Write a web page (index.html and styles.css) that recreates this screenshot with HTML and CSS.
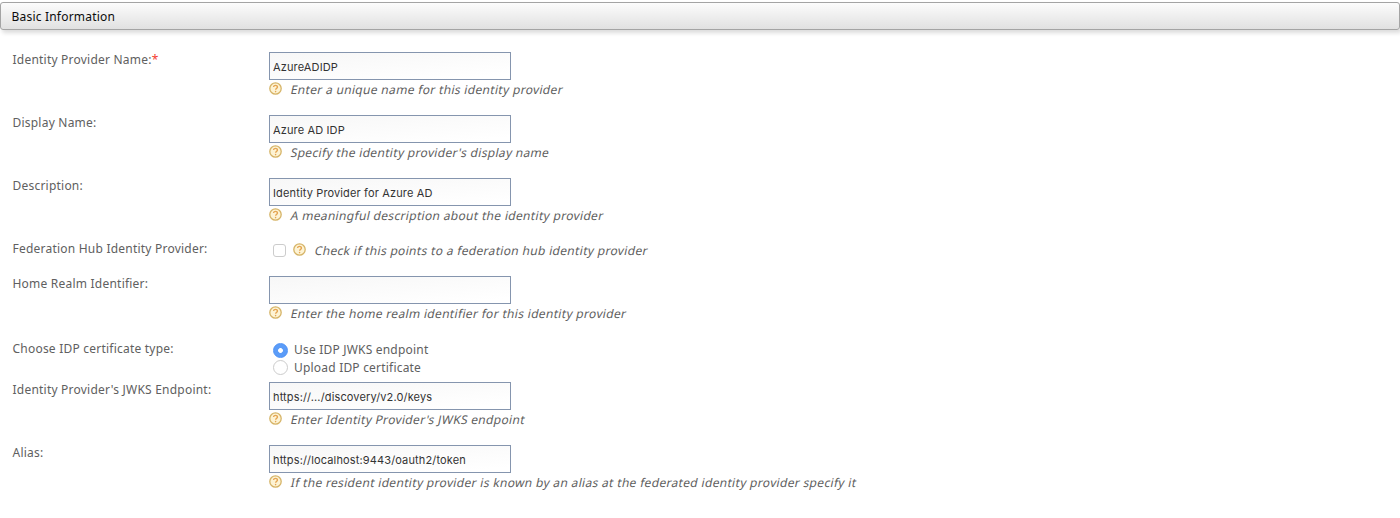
FILE: index.html
```
<!DOCTYPE html>
<html lang="en">
<head>
<meta charset="utf-8">
<title>Basic Information</title>
<link rel="stylesheet" href="styles.css">
</head>
<body>
<svg width="0" height="0" class="defs">
  <symbol id="help" viewBox="0 0 13 13">
    <circle cx="6.5" cy="6.5" r="5.7" fill="#fdf3d4" stroke="#d6b468" stroke-width="1.3"/>
    <path d="M4.6 5.1C4.6 2.9 8.5 2.9 8.5 5.1C8.5 6.4 6.6 6.4 6.6 7.8" fill="none" stroke="#e5a552" stroke-width="1.3"/>
    <circle cx="6.6" cy="9.6" r=".8" fill="#e5a552"/>
  </symbol>
</svg>
<h2 class="section-title">Basic Information</h2>
<form class="form">
  <div class="row">
    <label class="label">Identity Provider Name:<span class="required">*</span></label>
    <div class="field">
      <input class="text-input" type="text" value="AzureADIDP">
      <div class="help"><svg class="help-icon"><use href="#help"/></svg><span class="hint">Enter a unique name for this identity provider</span></div>
    </div>
  </div>
  <div class="row">
    <label class="label">Display Name:</label>
    <div class="field">
      <input class="text-input" type="text" value="Azure AD IDP">
      <div class="help"><svg class="help-icon"><use href="#help"/></svg><span class="hint">Specify the identity provider's display name</span></div>
    </div>
  </div>
  <div class="row">
    <label class="label">Description:</label>
    <div class="field">
      <input class="text-input" type="text" value="Identity Provider for Azure AD">
      <div class="help"><svg class="help-icon"><use href="#help"/></svg><span class="hint">A meaningful description about the identity provider</span></div>
    </div>
  </div>
  <div class="row row-check">
    <label class="label">Federation Hub Identity Provider:</label>
    <div class="field check-field">
      <input class="checkbox" type="checkbox">
      <div class="help"><svg class="help-icon"><use href="#help"/></svg><span class="hint">Check if this points to a federation hub identity provider</span></div>
    </div>
  </div>
  <div class="row row-realm">
    <label class="label">Home Realm Identifier:</label>
    <div class="field">
      <input class="text-input" type="text" value="">
      <div class="help"><svg class="help-icon"><use href="#help"/></svg><span class="hint">Enter the home realm identifier for this identity provider</span></div>
    </div>
  </div>
  <div class="row row-cert">
    <label class="label">Choose IDP certificate type:</label>
    <div class="field radio-field">
      <label class="option"><input class="radio" type="radio" name="cert" checked><span>Use IDP JWKS endpoint</span></label>
      <label class="option"><input class="radio" type="radio" name="cert"><span>Upload IDP certificate</span></label>
    </div>
  </div>
  <div class="row">
    <label class="label">Identity Provider's JWKS Endpoint:</label>
    <div class="field">
      <input class="text-input" type="text" value="https://.../discovery/v2.0/keys">
      <div class="help"><svg class="help-icon"><use href="#help"/></svg><span class="hint">Enter Identity Provider's JWKS endpoint</span></div>
    </div>
  </div>
  <div class="row">
    <label class="label">Alias:</label>
    <div class="field">
      <input class="text-input" type="text" value="https://localhost:9443/oauth2/token">
      <div class="help"><svg class="help-icon"><use href="#help"/></svg><span class="hint">If the resident identity provider is known by an alias at the federated identity provider specify it</span></div>
    </div>
  </div>
</form>
</body>
</html>
```
FILE: styles.css
```
* { box-sizing: border-box; }
body {
  margin: 0;
  padding-top: 2px;
  height: 518px;
  overflow: hidden;
  background: #fff;
  color: #606060;
  font: 12px/16px "Lucida Grande", "Noto Sans", sans-serif;
}
.defs { display: block; }
.section-title {
  margin: 0;
  height: 28px;
  padding: 0 10.5px;
  border: 1px solid #a4a4a4;
  border-radius: 3px;
  background: linear-gradient(#fcfcfc, #e1e1e1);
  box-shadow: 2px 3px 4px rgba(0, 0, 0, .14);
  color: #0c0c0c;
  font-size: 12px;
  font-weight: 400;
  line-height: 27px;
  letter-spacing: .2px;
}
.form { padding: 22px 12px 0; }
.row {
  display: grid;
  grid-template-columns: 257px 1fr;
  height: 63px;
}
.row-check { height: 34.5px; }
.row-realm { height: 65px; }
.row-cert { height: 41.5px; }
.label { padding-left: .5px; letter-spacing: .22px; white-space: nowrap; }
.required { color: #f43b2f; }
.text-input {
  display: block;
  width: 242px;
  height: 28px;
  margin: 0;
  padding: 2px 3px 0;
  border: 1px solid #8595ae;
  border-radius: 0;
  outline: none;
  background: linear-gradient(175deg, #f7f7f7, #fff 90%);
  color: #333;
  font: 11px/16px Inter, sans-serif;
  letter-spacing: .14px;
}
.help { display: flex; gap: 8px; height: 20px; padding-top: 2px; margin-left: -.5px; }
.help-icon { width: 13px; height: 13px; }
/* Slants the upright face so the hint keeps its letter shapes. */
.hint {
  height: 16px;
  letter-spacing: .325px;
  white-space: nowrap;
  transform: skewX(-12deg);
  transform-origin: 0 75%;
}
.check-field { display: flex; padding: 0 0 0 4px; gap: 7px; }
.checkbox {
  appearance: none;
  width: 13px;
  height: 13px;
  margin: 3px 0 0;
  border: 1px solid #ccc;
  border-radius: 3px;
  background: #fff;
}
.radio-field { padding: 1px 0 0 4px; }
.option { display: flex; gap: 6px; height: 17.5px; align-items: center; letter-spacing: .2px; }
.radio {
  appearance: none;
  width: 15px;
  height: 15px;
  margin: 0;
  border: 1px solid #ccc;
  border-radius: 50%;
  background: #fff;
}
.radio:checked {
  border-color: #4e92f6;
  background: radial-gradient(circle, #fff 0 2px, #5b9cf8 2.8px);
}
```
